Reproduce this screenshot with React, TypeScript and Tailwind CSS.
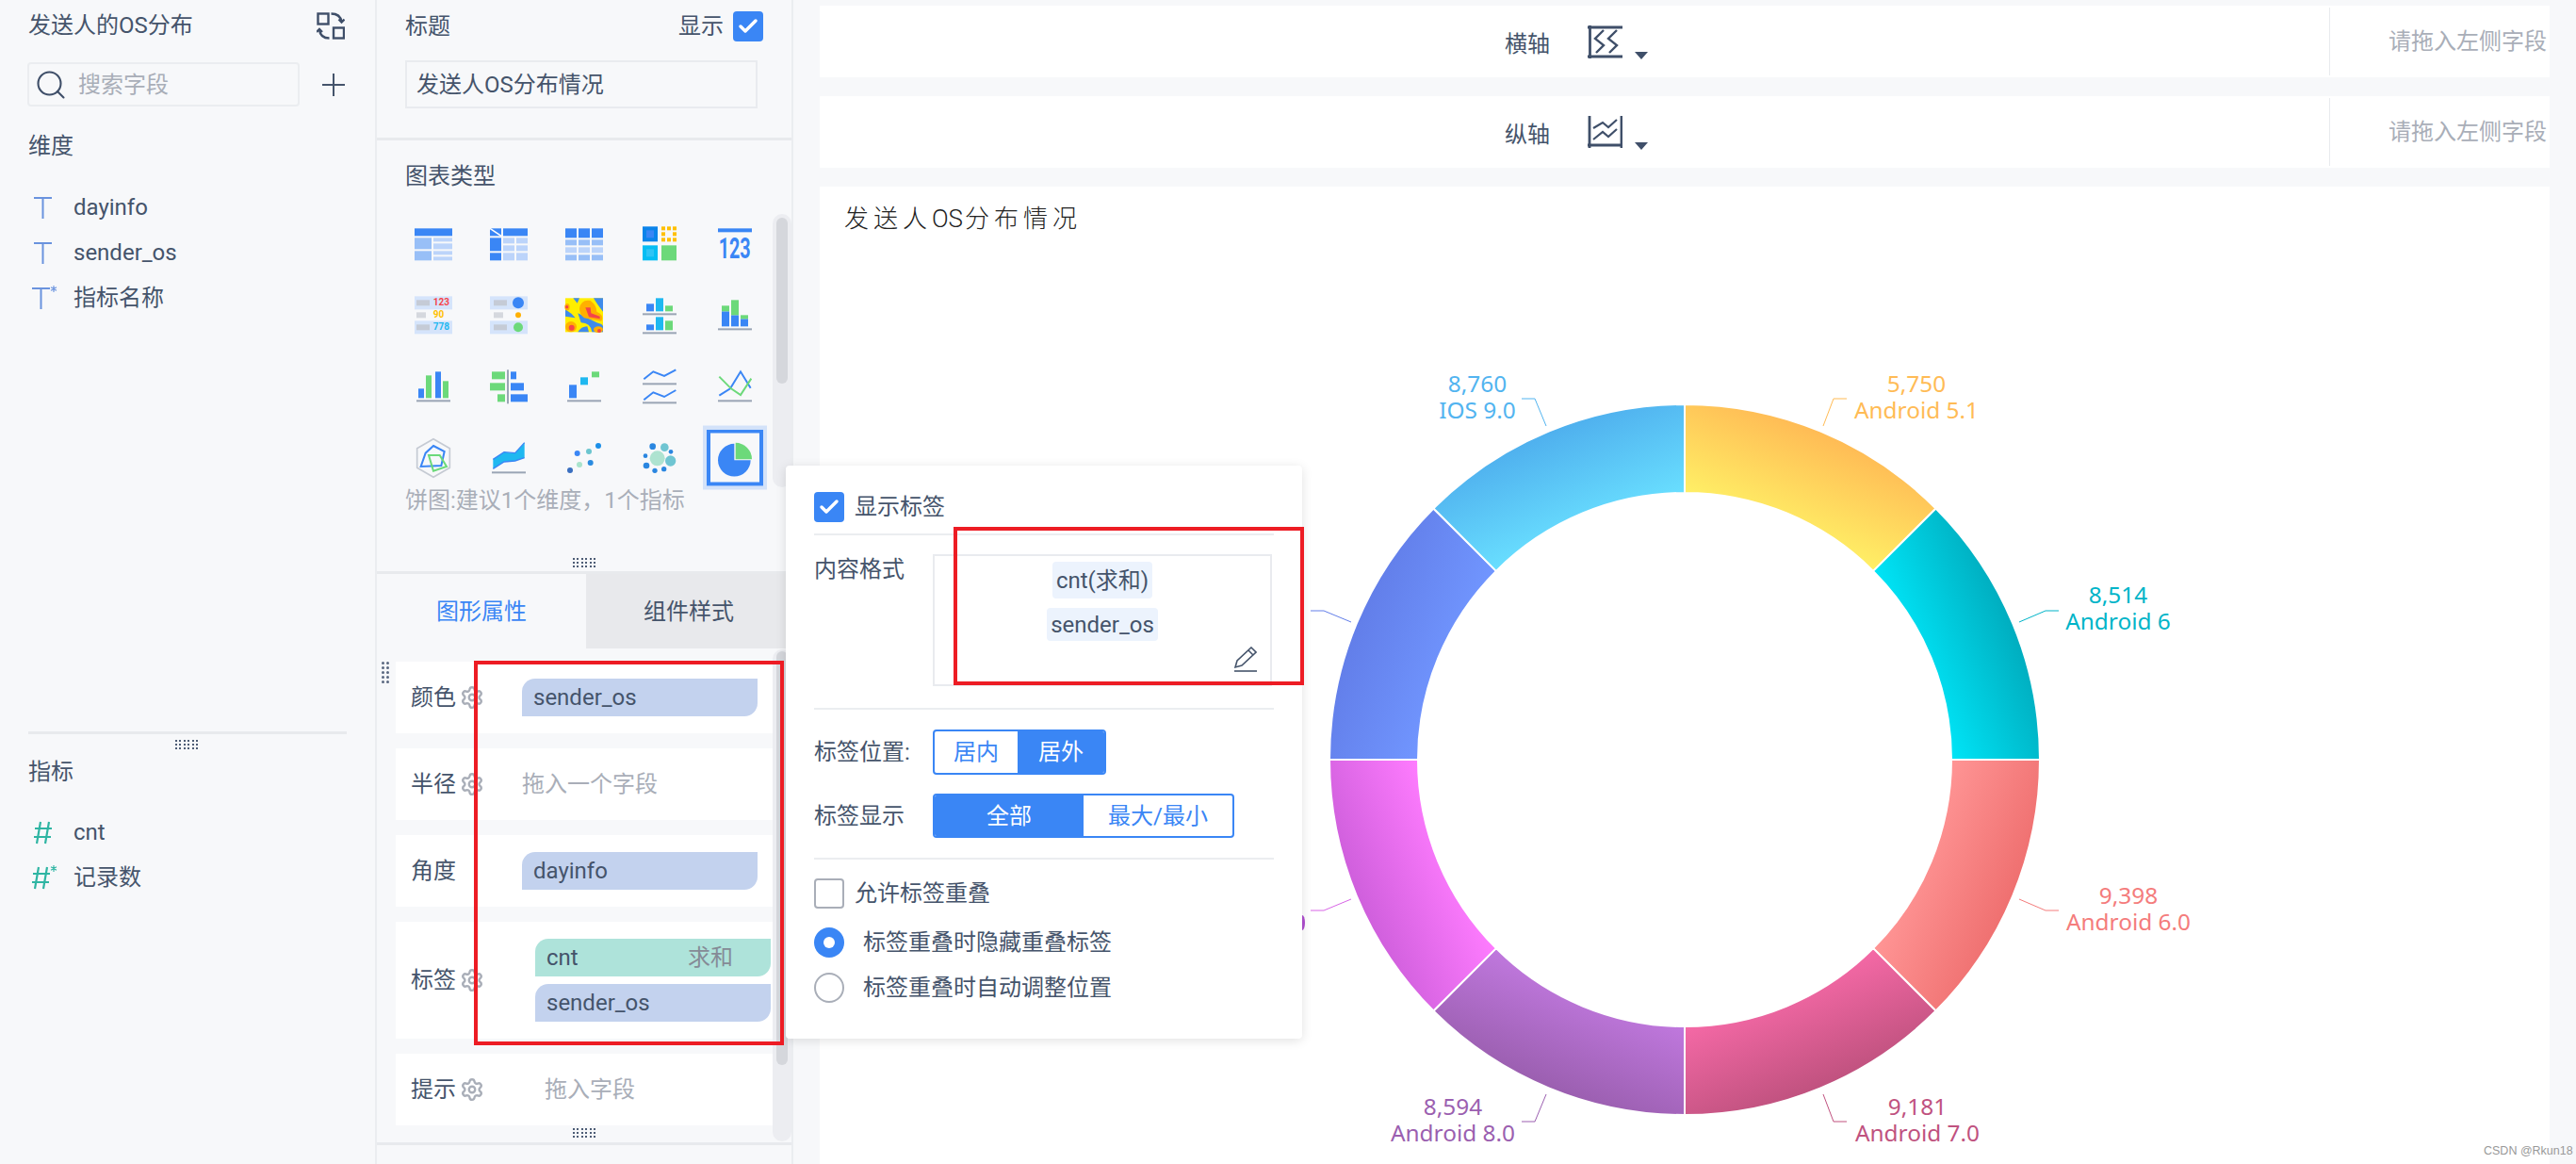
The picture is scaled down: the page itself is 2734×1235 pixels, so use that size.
import { Check, Search, Settings } from "lucide-react";
import type { ReactNode } from "react";

const BLUE = "#3a86f5";
const L1 = "#98bff7";
const L2 = "#bcd4fa";
const GREEN = "#6cd97a";
const CYAN = "#1fb8f0";
const GRAY = "#9aa5b5";
const NUM_FONT = "Roboto, sans-serif";

function Dots({ cols, rows }: { cols: number; rows: number }) {
    const items = Array.from({ length: cols * rows });
    return (
        <div className={cols === 6 ? "grid grid-cols-6 gap-x-[2.6px] gap-y-[2px]" : "grid grid-cols-2 gap-x-[2px] gap-y-[2px]"}>
            {items.map((_, i) => (
                <div key={i} className={rows === 5 ? "w-[3px] h-[3px] rounded-full bg-[#5a6880]" : "w-[2px] h-[2px] bg-[#4d5c75]"} />
            ))}
        </div>
    );
}

function TIcon({ star }: { star?: boolean }) {
    return (
        <svg width="28" height="28" viewBox="0 0 28 28" className="shrink-0" fill="none" stroke="#6a93de" strokeWidth="2">
            {star ? (
                <>
                    <path d="M0 4H19M9.5 4V26" />
                    <path d="M23 1V8M20 2.8L26 6.2M26 2.8L20 6.2" strokeWidth="1.1" />
                </>
            ) : (
                <path d="M2 4H21M11.5 4V26" />
            )}
        </svg>
    );
}

function HashIcon({ star }: { star?: boolean }) {
    return (
        <svg width="28" height="28" viewBox="0 0 28 28" className="shrink-0" fill="none" stroke="#2fb5a3" strokeWidth="2.2">
            {star ? (
                <>
                    <path d="M7 3L3 26M16 3L12 26M1 10H19M0 19H18" />
                    <path d="M23 1V8M20 2.8L26 6.2M26 2.8L20 6.2" strokeWidth="1.1" />
                </>
            ) : (
                <path d="M9 3L5 26M18 3L14 26M3 10H21M2 19H20" />
            )}
        </svg>
    );
}

function FieldRow({ icon, label }: { icon: ReactNode; label: string }) {
    return (
        <div className="flex items-center h-[48px] pl-[34px]">
            {icon}
            <span className="ml-[16px]">{label}</span>
        </div>
    );
}

function SwapIcon() {
    return (
        <svg width="30" height="29" viewBox="0 0 30 29" fill="none" stroke="#3f4f69" strokeWidth="2.4">
            <rect x="1.5" y="1.5" width="11" height="11" />
            <rect x="18" y="16.5" width="11" height="11" />
            <path d="M15.5 1.5Q25 1.5 26.5 10M23.5 7.5l3 3 3-3" />
            <path d="M13.5 27.5Q4 27.5 3 18.5M0 21l3-3 3 3" />
        </svg>
    );
}

function Cb({ checked }: { checked: boolean }) {
    return checked ? (
        <div className="w-[32px] h-[32px] rounded-[4px] bg-[#3a86f5] flex items-center justify-center shrink-0">
            <Check size={24} color="#fff" strokeWidth={3.5} />
        </div>
    ) : (
        <div className="w-[32px] h-[32px] rounded-[4px] border-2 border-[#a9aeb8] shrink-0" />
    );
}

function Icon({ c, r, selected, children }: { c: number; r: number; selected?: boolean; children: ReactNode }) {
    const cx = 120 + 240 * c;
    const cy = 110 + 225 * r;
    return (
        <div className="flex items-center justify-center">
            <div className={selected ? "w-[60px] h-[60px] translate-y-[1.5px] shadow-[inset_0_0_0_4px_#3a86f5,0_0_0_4px_#d3e2f9]" : "w-[60px] h-[60px]"}>
                <svg width="60" height="60" viewBox={`${cx - 90} ${cy - 90} 180 180`} className="overflow-visible">
                    {children}
                </svg>
            </div>
        </div>
    );
}

function R({ x, y, w, h, f }: { x: number; y: number; w: number; h: number; f: string }) {
    return <rect x={x} y={y} width={w} height={h} fill={f} />;
}

function ChartIcons() {
    return (
        <div className="grid grid-cols-5 grid-rows-[75px_75px_75px_75px] w-[400px] h-[300px] shrink-0">
            <Icon c={0} r={0}>
                <R x={60} y={60} w={120} h={24} f={BLUE} />
                <R x={60} y={90} w={54} h={36} f={L1} />
                <R x={60} y={132} w={54} h={30} f={L1} />
                <R x={120} y={90} w={60} h={12} f={L2} />
                <R x={120} y={108} w={60} h={18} f={L2} />
                <R x={120} y={132} w={60} h={12} f={L2} />
                <R x={120} y={150} w={60} h={12} f={L2} />
            </Icon>
            <Icon c={1} r={0}>
                <R x={300} y={60} w={36} h={24} f={BLUE} />
                <path d="M300 60L336 84" stroke="#fff" strokeWidth="5" />
                <R x={342} y={60} w={78} h={24} f={BLUE} />
                <R x={300} y={90} w={36} h={42} f={BLUE} />
                <R x={300} y={138} w={36} h={24} f={BLUE} />
                <R x={342} y={90} w={36} h={18} f={L2} />
                <R x={384} y={90} w={36} h={18} f={L2} />
                <R x={342} y={114} w={36} h={18} f={L2} />
                <R x={384} y={114} w={36} h={18} f={L2} />
                <R x={342} y={138} w={36} h={24} f={L2} />
                <R x={384} y={138} w={36} h={24} f={L2} />
            </Icon>
            <Icon c={2} r={0}>
                {[540, 582, 624].map((x) => (
                    <g key={x}>
                        <R x={x} y={60} w={36} h={30} f={BLUE} />
                        <R x={x} y={96} w={36} h={18} f={L1} />
                        <R x={x} y={120} w={36} h={18} f={L2} />
                        <R x={x} y={144} w={36} h={18} f={L1} />
                    </g>
                ))}
            </Icon>
            <Icon c={3} r={0}>
                <R x={786} y={54} w={48} h={48} f="#0b84ea" />
                <R x={798} y={66} w={24} h={24} f="#3a86f5" />
                {[[846, 54], [864, 54], [882, 54], [846, 72], [882, 72], [846, 90], [864, 90], [882, 90]].map(([x, y]) => (
                    <R key={`${x}-${y}`} x={x} y={y} w={12} h={12} f="#ffc000" />
                ))}
                <R x={786} y={114} w={48} h={48} f="#05bdf3" />
                <R x={798} y={126} w={24} h={24} f="#2fc4f5" />
                <R x={846} y={114} w={48} h={48} f={GREEN} />
            </Icon>
            <Icon c={4} r={0}>
                <R x={1026} y={60} w={108} h={12} f={BLUE} />
                <text x={1028} y={155} fontFamily={NUM_FONT} fontWeight="700" fontSize="92" fill={BLUE} textLength={102} lengthAdjust="spacingAndGlyphs">123</text>
            </Icon>

            <Icon c={0} r={1}>
                <R x={60} y={276} w={120} h={42} f="#d5e4fb" />
                <R x={60} y={354} w={120} h={42} f="#d5e4fb" />
                <R x={66} y={288} w={42} h={18} f="#c5cbd6" />
                <R x={66} y={327} w={30} h={18} f="#d5d8de" />
                <R x={66} y={366} w={42} h={18} f="#c5cbd6" />
                <text x={119} y={306} fontFamily={NUM_FONT} fontWeight="700" fontSize="30" fill="#f5444a">123</text>
                <text x={119} y={345} fontFamily={NUM_FONT} fontWeight="700" fontSize="30" fill="#ffc000">90</text>
                <text x={119} y={384} fontFamily={NUM_FONT} fontWeight="700" fontSize="30" fill={CYAN}>778</text>
            </Icon>
            <Icon c={1} r={1}>
                <R x={300} y={276} w={120} h={42} f="#d5e4fb" />
                <R x={300} y={354} w={120} h={42} f="#d5e4fb" />
                <R x={312} y={288} w={42} h={18} f="#c5cbd6" />
                <R x={312} y={327} w={30} h={18} f="#d5d8de" />
                <R x={312} y={366} w={42} h={18} f="#c5cbd6" />
                <circle cx={390} cy={297} r={18} fill={BLUE} />
                <circle cx={390} cy={336} r={9} fill="#ffb000" />
                <circle cx={390} cy={375} r={15} fill={GREEN} />
            </Icon>
            <Icon c={2} r={1}>
                <R x={540} y={282} w={120} h={108} f="#ffee00" />
                <path d="M580 330Q610 345 640 360Q660 365 660 372L660 390L625 390Q620 360 590 360Q585 345 580 330Z" fill="#3f8bea" />
                <path d="M540 318Q560 330 572 345L540 340ZM580 390Q590 372 610 372L615 390ZM630 282L660 282L660 325Q640 300 630 282ZM565 282L585 282L578 298Z" fill="#3f8bea" />
                <path d="M585 315Q590 285 620 290Q640 305 640 325Q665 335 655 355Q620 350 600 345Q585 335 585 315Z" fill="#ffb000" />
                <ellipse cx={558} cy={373} rx={18} ry={17} fill="#ffb000" />
                <ellipse cx={645} cy={382} rx={15} ry={10} fill="#ffb000" />
                <ellipse cx={546} cy={310} rx={8} ry={11} fill="#ffb000" />
                <path d="M604 312L620 312L622 330L650 340L650 348L615 342Z" fill="#f5444a" />
                <circle cx={560} cy={376} r={9} fill="#f5444a" />
                <circle cx={648} cy={386} r={6} fill="#f5444a" />
                <circle cx={545} cy={310} r={5} fill="#f5444a" />
            </Icon>
            <Icon c={3} r={1}>
                <R x={798} y={300} w={24} h={24} f={BLUE} />
                <R x={828} y={282} w={24} h={42} f={CYAN} />
                <R x={858} y={306} w={24} h={18} f={GREEN} />
                <R x={786} y={330} w={108} h={6} f={GRAY} />
                <R x={798} y={366} w={24} h={18} f={BLUE} />
                <R x={828} y={342} w={24} h={42} f={CYAN} />
                <R x={858} y={354} w={24} h={30} f={GREEN} />
                <R x={786} y={390} w={108} h={6} f={GRAY} />
            </Icon>
            <Icon c={4} r={1}>
                <R x={1038} y={324} w={24} h={48} f={BLUE} />
                <R x={1038} y={306} w={24} h={18} f={GREEN} />
                <R x={1068} y={336} w={24} h={36} f={BLUE} />
                <R x={1068} y={288} w={24} h={48} f={GREEN} />
                <R x={1098} y={348} w={24} h={24} f={BLUE} />
                <R x={1098} y={336} w={24} h={12} f={GREEN} />
                <R x={1026} y={378} w={108} h={6} f={GRAY} />
            </Icon>

            <Icon c={0} r={2}>
                <R x={72} y={570} w={18} h={30} f={BLUE} />
                <R x={96} y={528} w={18} h={72} f={GREEN} />
                <R x={126} y={516} w={18} h={84} f={BLUE} />
                <R x={150} y={546} w={18} h={54} f={GREEN} />
                <R x={66} y={606} w={108} h={6} f={GRAY} />
            </Icon>
            <Icon c={1} r={2}>
                <R x={354} y={510} w={6} h={108} f={GRAY} />
                <R x={306} y={516} w={42} h={24} f={GREEN} />
                <R x={300} y={552} w={48} h={24} f={GREEN} />
                <R x={324} y={588} w={24} h={24} f={GREEN} />
                <R x={366} y={516} w={18} h={24} f={BLUE} />
                <R x={366} y={552} w={42} h={24} f={BLUE} />
                <R x={366} y={588} w={54} h={24} f={BLUE} />
            </Icon>
            <Icon c={2} r={2}>
                <R x={552} y={558} w={24} h={42} f={BLUE} />
                <R x={588} y={534} w={24} h={24} f={CYAN} />
                <R x={624} y={516} w={24} h={18} f={GREEN} />
                <R x={546} y={606} w={108} h={6} f={GRAY} />
            </Icon>
            <Icon c={3} r={2}>
                <polyline points="790,540 820,516 855,530 892,510" fill="none" stroke={BLUE} strokeWidth="6" />
                <R x={786} y={552} w={108} h={6} f={GRAY} />
                <polyline points="790,606 820,582 855,596 892,575" fill="none" stroke={BLUE} strokeWidth="6" />
                <R x={786} y={612} w={108} h={6} f={GRAY} />
            </Icon>
            <Icon c={4} r={2}>
                <polyline points="1030,592 1065,570 1098,516 1130,568" fill="none" stroke={BLUE} strokeWidth="6" />
                <polyline points="1030,532 1068,570 1098,590 1132,538" fill="none" stroke={GREEN} strokeWidth="6" />
                <R x={1026} y={606} w={108} h={6} f={GRAY} />
            </Icon>

            <Icon c={0} r={3}>
                <polygon points="120,730 172,760 172,822 120,852 68,822 68,760" fill="none" stroke="#c5cad3" strokeWidth="5" />
                <polygon points="120,752 155,770 145,815 80,818 95,775" fill="none" stroke={BLUE} strokeWidth="6" />
                <polygon points="105,782 140,782 162,818 120,832" fill="none" stroke={GREEN} strokeWidth="6" />
            </Icon>
            <Icon c={1} r={3}>
                <polygon points="310,795 345,772 380,775 410,742 410,790 380,800 345,803 310,825" fill={CYAN} />
                <polyline points="310,795 345,772 380,775 410,742" fill="none" stroke={BLUE} strokeWidth="4" />
                <polyline points="310,825 345,803 380,800 410,790" fill="none" stroke={BLUE} strokeWidth="4" />
                <R x={306} y={834} w={108} h={6} f={GRAY} />
            </Icon>
            <Icon c={2} r={3}>
                <circle cx={555} cy={830} r={9} fill="#3a6fc0" />
                <circle cx={585} cy={812} r={9} fill="#a9e3cc" />
                <circle cx={620} cy={806} r={9} fill="#2a8be0" />
                <circle cx={578} cy={776} r={9} fill="#3a86f5" />
                <circle cx={615} cy={770} r={9} fill="#6cc5cf" />
                <circle cx={645} cy={752} r={9} fill="#1c8fe8" />
            </Icon>
            <Icon c={3} r={3}>
                <circle cx={833} cy={792} r={24} fill="#aee3d0" />
                <circle cx={875} cy={800} r={17} fill="#6fc5d2" />
                <circle cx={856} cy={757} r={13} fill="#6fc5d2" />
                <circle cx={818} cy={754} r={10} fill="#2a86e0" />
                <circle cx={876} cy={771} r={7} fill="#2a86e0" />
                <circle cx={795} cy={784} r={7} fill="#2a86e0" />
                <circle cx={798} cy={815} r={10} fill="#2a86e0" />
                <circle cx={825} cy={831} r={8} fill="#2a86e0" />
                <circle cx={854} cy={826} r={8} fill="#2a86e0" />
            </Icon>
            <Icon c={4} r={3} selected>
                <path d="M1078 741A52 52 0 1 0 1130 793L1078 793Z" fill={BLUE} />
                <path d="M1082 738A52 52 0 0 1 1134 790L1082 790Z" fill={GREEN} />
            </Icon>
        </div>
    );
}

function Pill({ label, extra, green }: { label: string; extra?: string; green?: boolean }) {
    return (
        <div className={`w-[250px] h-[40px] flex items-center justify-between pl-[12px] pr-[40px] rounded-tl-[14px] rounded-br-[14px] ${green ? "bg-[#aee3da]" : "bg-[#c3d2ee]"}`}>
            <span>{label}</span>
            {extra && <span className="text-[#858b96]">{extra}</span>}
        </div>
    );
}

function PropRow({ label, gear = true, tall, children }: { label: string; gear?: boolean; tall?: boolean; children: ReactNode }) {
    return (
        <div className={`flex items-center bg-white ${tall ? "h-[124px]" : "h-[76px]"}`}>
            <div className="w-[134px] pl-[16px] flex items-center shrink-0">
                <span>{label}</span>
                {gear && <Settings size={26} color="#a9aeb8" strokeWidth={2.2} className="ml-[4px]" />}
            </div>
            {children}
        </div>
    );
}

function LeftPanel() {
    return (
        <aside className="w-[400px] shrink-0 border-r-2 border-[#ebedf0]">
            <div className="h-[54px] flex items-center justify-between pl-[30px] pr-[32px]">
                <span>发送人的OS分布</span>
                <SwapIcon />
            </div>
            <div className="mt-[12px] h-[47px] flex items-center pl-[29px]">
                <div className="w-[289px] h-[47px] border-2 border-[#ebedf0] rounded-[4px] flex items-center pl-[5px]">
                    <Search size={36} color="#3f4f69" strokeWidth={1.4} />
                    <span className="ml-[11px] text-[#a9aeb8]">搜索字段</span>
                </div>
                <svg width="24" height="24" viewBox="0 0 24 24" stroke="#45546b" strokeWidth="2" className="ml-[24px]">
                    <path d="M12 0V24M0 12H24" />
                </svg>
            </div>
            <div className="mt-[25px] h-[34px] flex items-center pl-[30px]">维度</div>
            <div className="mt-[24px]">
                <FieldRow icon={<TIcon />} label="dayinfo" />
                <FieldRow icon={<TIcon />} label="sender_os" />
                <FieldRow icon={<TIcon star />} label="指标名称" />
            </div>
            <div className="mt-[436px] ml-[30px] w-[338px] h-[3px] bg-[#e8eaed]" />
            <div className="h-[22px] flex items-center justify-center ml-[-2px] w-[400px]">
                <Dots cols={6} rows={3} />
            </div>
            <div className="mt-[1px] h-[34px] flex items-center pl-[30px]">指标</div>
            <div className="mt-[23px]">
                <FieldRow icon={<HashIcon />} label="cnt" />
                <FieldRow icon={<HashIcon star />} label="记录数" />
            </div>
        </aside>
    );
}

function MiddlePanel() {
    return (
        <aside className="w-[442px] shrink-0 border-r-2 border-[#ebedf0] flex flex-col">
            <div className="h-[56px] flex items-center justify-between pl-[30px] pr-[30px]">
                <span>标题</span>
                <div className="flex items-center gap-[10px]">
                    <span>显示</span>
                    <Cb checked />
                </div>
            </div>
            <div className="mt-[8px] ml-[30px] w-[374px] h-[51px] border-2 border-[#e9ebef] flex items-center pl-[10px]">发送人OS分布情况</div>
            <div className="mt-[31px] h-[3px] bg-[#e8eaed] shrink-0" />
            <div className="mt-[21px] h-[34px] flex items-center pl-[30px]">图表类型</div>
            <div className="mt-[17px] h-[296px] flex pl-[20px]">
                <ChartIcons />
                <div className="w-[20px] h-[290px] mt-[6px] rounded-[10px] bg-[#ecedf1] flex justify-center pt-[4px]">
                    <div className="w-[12px] h-[176px] rounded-[6px] bg-[#d5d7dc]" />
                </div>
            </div>
            <div className="h-[28px] flex items-center pl-[30px] text-[#a9aeb8]">饼图:建议1个维度{"\uFF0C"}1个指标</div>
            <div className="mt-[47px] h-[10px] flex items-center justify-center">
                <Dots cols={6} rows={3} />
            </div>
            <div className="mt-[4px] h-[3px] bg-[#e8eaed] shrink-0" />
            <div className="h-[79px] flex shrink-0">
                <div className="w-[222px] flex items-center justify-center text-[#3a86f5]">图形属性</div>
                <div className="flex-1 flex items-center justify-center bg-[#e8e9ec]">组件样式</div>
            </div>
            <div className="relative h-[524px] flex pl-[20px] shrink-0">
                <div className="absolute left-[5px] top-[14px]">
                    <Dots cols={2} rows={5} />
                </div>
                <div className="w-[400px] shrink-0 pt-[14px] flex flex-col gap-[16px]">
                    <PropRow label="颜色">
                        <Pill label="sender_os" />
                    </PropRow>
                    <PropRow label="半径">
                        <span className="text-[#a9aeb8]">拖入一个字段</span>
                    </PropRow>
                    <PropRow label="角度" gear={false}>
                        <Pill label="dayinfo" />
                    </PropRow>
                    <PropRow label="标签" tall>
                        <div className="ml-[14px] flex flex-col gap-[8px]">
                            <Pill label="cnt" extra="求和" green />
                            <Pill label="sender_os" />
                        </div>
                    </PropRow>
                    <PropRow label="提示">
                        <span className="ml-[24px] text-[#a9aeb8]">拖入字段</span>
                    </PropRow>
                    <div className="flex justify-center -mt-[13px]">
                        <Dots cols={6} rows={3} />
                    </div>
                </div>
                <div className="w-[20px] h-[522px] mt-[1px] rounded-[10px] bg-[#ecedf1] flex justify-center pt-[2px]">
                    <div className="w-[12px] h-[439px] rounded-[6px] bg-[#d5d7dc]" />
                </div>
            </div>
            <div className="h-[3px] bg-[#e8eaed] shrink-0" />
        </aside>
    );
}

function AxisBar({ label, icon }: { label: string; icon: ReactNode }) {
    return (
        <div className="h-[76px] bg-white flex items-center shrink-0">
            <div className="w-[1603px] h-[72px] flex items-center pl-[727px] border-r border-[#e8eaed] shrink-0">
                <span className="pt-[5px]">{label}</span>
                <div className="ml-[40px]">{icon}</div>
                <div className="ml-[13px] mt-[29px] w-0 h-0 border-x-[7px] border-x-transparent border-t-[8px] border-t-[#3f4f69]" />
            </div>
            <span className="ml-[62px] text-[#a9aeb8] whitespace-nowrap">请拖入左侧字段</span>
        </div>
    );
}

const CX = 1788;
const CY = 806;
const RO = 377;
const RI = 283;

const SEGMENTS = [
    { id: "s0", outer: "#ffbb55", inner: "#fff066" },
    { id: "s1", outer: "#00adbf", inner: "#00e5f7" },
    { id: "s2", outer: "#ef7070", inner: "#ff9595" },
    { id: "s3", outer: "#c0527f", inner: "#f569a6" },
    { id: "s4", outer: "#9b5fb0", inner: "#c078de" },
    { id: "s5", outer: "#cf5fdc", inner: "#ff7cff" },
    { id: "s6", outer: "#627ee9", inner: "#7196ff" },
    { id: "s7", outer: "#4fb0ee", inner: "#69dfff" },
];

function pt(r: number, deg: number) {
    const a = (deg * Math.PI) / 180;
    return [CX + r * Math.sin(a), CY - r * Math.cos(a)];
}

const LINES = [
    { c: "#ffbb55", p: "1935,452 1946,423 1960,423" },
    { c: "#00b4c8", p: "2143,660 2171,648 2185,648" },
    { c: "#f47c7c", p: "2143,954 2171,966 2185,966" },
    { c: "#c0527f", p: "1935,1161 1946,1190 1960,1190" },
    { c: "#9b5fb0", p: "1641,1161 1629,1190 1615,1190" },
    { c: "#d865e6", p: "1434,954 1405,966 1391,966" },
    { c: "#627ee9", p: "1434,660 1405,648 1391,648" },
    { c: "#52b4f0", p: "1641,452 1629,423 1615,423" },
];

const LABELS = [
    { c: "#ffbb55", x: 2034, y: 407, v: "5,750", n: "Android 5.1" },
    { c: "#00b4c8", x: 2248, y: 631, v: "8,514", n: "Android 6" },
    { c: "#f47c7c", x: 2259, y: 950, v: "9,398", n: "Android 6.0" },
    { c: "#c0527f", x: 2035, y: 1174, v: "9,181", n: "Android 7.0" },
    { c: "#9b5fb0", x: 1542, y: 1174, v: "8,594", n: "Android 8.0" },
    { c: "#52b4f0", x: 1568, y: 407, v: "8,760", n: "IOS 9.0" },
];

function Donut() {
    return (
        <svg width="1836" height="971" viewBox="870 264 1836 971" className="block">
            <defs>
                {SEGMENTS.map((s, i) => {
                    const mid = i * 45 + 22.5;
                    const [x1, y1] = pt(RO, mid);
                    const [x2, y2] = pt(RI * Math.cos(Math.PI / 8), mid);
                    return (
                        <linearGradient key={s.id} id={s.id} gradientUnits="userSpaceOnUse" x1={x1} y1={y1} x2={x2} y2={y2}>
                            <stop offset="0" stopColor={s.outer} />
                            <stop offset="1" stopColor={s.inner} />
                        </linearGradient>
                    );
                })}
            </defs>
            {SEGMENTS.map((s, i) => {
                const [ax, ay] = pt(RO, i * 45);
                const [bx, by] = pt(RO, i * 45 + 45);
                const [cx, cy] = pt(RI, i * 45 + 45);
                const [dx, dy] = pt(RI, i * 45);
                return (
                    <path
                        key={s.id}
                        d={`M${ax} ${ay}A${RO} ${RO} 0 0 1 ${bx} ${by}L${cx} ${cy}A${RI} ${RI} 0 0 0 ${dx} ${dy}Z`}
                        fill={`url(#${s.id})`}
                        stroke="#fff"
                        strokeWidth="2"
                    />
                );
            })}
            {LINES.map((l) => (
                <polyline key={l.p} points={l.p} fill="none" stroke={l.c} strokeWidth="1" />
            ))}
            {LABELS.map((l) => (
                <g key={l.n} fill={l.c} textAnchor="middle" fontSize="24.4" fontFamily="'Noto Sans', sans-serif">
                    <text x={l.x} y={l.y + 9}>{l.v}</text>
                    <text x={l.x} y={l.y + 9 + 28}>{l.n}</text>
                </g>
            ))}
            <ellipse cx="1382" cy="979" rx="3" ry="8" fill="#b04fd0" />
        </svg>
    );
}

function Popup() {
    return (
        <div className="absolute left-[834px] top-[494px] w-[548px] h-[608px] bg-white rounded-[4px] shadow-[0_2px_12px_rgba(0,0,0,0.12)] pl-[30px] pr-[30px] pt-[28px]">
            <div className="flex items-center gap-[11px] h-[32px]">
                <Cb checked />
                <span>显示标签</span>
            </div>
            <div className="mt-[12px] h-[2px] bg-[#ebedf0]" />
            <div className="mt-[20px] flex items-start">
                <span className="w-[126px] leading-[34px] -mt-[1px]">内容格式</span>
                <div className="relative w-[360px] h-[140px] border-2 border-[#e9ebef] flex flex-col items-center pt-[6px]">
                    <span className="h-[39px] px-[4px] rounded-[4px] bg-[#ecf3fd] flex items-center">cnt(求和)</span>
                    <span className="mt-[10px] h-[35px] px-[4px] rounded-[4px] bg-[#ecf3fd] flex items-center">sender_os</span>
                    <svg width="24" height="27" viewBox="0 0 24 27" fill="none" stroke="#45546b" strokeWidth="1.6" className="absolute right-[14px] top-[96px]">
                        <path d="M18 1L23 6L8 20L1 22L3 15ZM15 4L20 9" />
                        <path d="M0 26H24" />
                    </svg>
                </div>
            </div>
            <div className="mt-[23px] h-[2px] bg-[#ebedf0]" />
            <div className="mt-[21px] flex items-center h-[48px]">
                <span className="w-[126px]">标签位置:</span>
                <div className="flex w-[184px] h-[48px] rounded-[4px] border-2 border-[#3a86f5] overflow-hidden">
                    <div className="w-[88px] flex items-center justify-center text-[#3a86f5]">居内</div>
                    <div className="flex-1 flex items-center justify-center bg-[#3a86f5] text-white">居外</div>
                </div>
            </div>
            <div className="mt-[20px] flex items-center h-[47px]">
                <span className="w-[126px]">标签显示</span>
                <div className="flex w-[320px] h-[47px] rounded-[4px] border-2 border-[#3a86f5] overflow-hidden">
                    <div className="w-[158px] flex items-center justify-center bg-[#3a86f5] text-white">全部</div>
                    <div className="flex-1 flex items-center justify-center text-[#3a86f5]">最大/最小</div>
                </div>
            </div>
            <div className="mt-[21px] h-[2px] bg-[#ebedf0]" />
            <div className="mt-[20px] flex items-center gap-[11px] h-[32px]">
                <Cb checked={false} />
                <span>允许标签重叠</span>
            </div>
            <div className="mt-[20px] flex items-center h-[32px]">
                <div className="w-[32px] h-[32px] rounded-full bg-[#3a86f5] flex items-center justify-center">
                    <div className="w-[12px] h-[12px] rounded-full bg-white" />
                </div>
                <span className="ml-[20px]">标签重叠时隐藏重叠标签</span>
            </div>
            <div className="mt-[16px] flex items-center h-[32px]">
                <div className="w-[32px] h-[32px] rounded-full border-2 border-[#a9aeb8]" />
                <span className="ml-[20px]">标签重叠时自动调整位置</span>
            </div>
        </div>
    );
}

export default function App() {
    return (
        <div className="relative w-[2734px] h-[1235px] overflow-hidden flex bg-[#f7f8fa] text-[24px] leading-none text-[#45546b] [font-family:Roboto,'Noto_Sans_CJK_SC',sans-serif]">
            <LeftPanel />
            <MiddlePanel />
            <main className="flex-1 pl-[28px] pr-[28px] pt-[6px] flex flex-col gap-[20px]">
                <AxisBar
                    label="横轴"
                    icon={
                        <svg width="37" height="35" viewBox="0 0 37 35" fill="none" stroke="#3f4f69" strokeWidth="2.4" className="block">
                            <path d="M0 2H37M0 33H37M2.5 0V35" strokeWidth="2.8" />
                            <path d="M17 5L8 14L17 21L9 29M31 5L22 14L31 21L23 29" />
                        </svg>
                    }
                />
                <AxisBar
                    label="纵轴"
                    icon={
                        <svg width="37" height="35" viewBox="0 0 37 35" fill="none" stroke="#3f4f69" strokeWidth="2.2" className="block">
                            <path d="M2 0V34M36 0V34M0 31H37" strokeWidth="2.8" />
                            <path d="M6 13L16 7L22 12L31 4M6 25L16 17L22 22L31 14" />
                        </svg>
                    }
                />
                <div className="flex-1 bg-white min-h-0">
                    <div className="h-[66px] flex items-center pl-[26px] pt-[1px] text-[26px] font-light tracking-[5px] text-[#222]">
                        发送人<span className="tracking-normal mr-[2px]">OS</span>分布情况
                    </div>
                    <Donut />
                </div>
            </main>

            <Popup />

            {/* red annotation boxes */}
            <div className="absolute left-[503px] top-[701px] w-[329px] h-[408px] border-[4px] border-[#ed1c24]" />
            <div className="absolute left-[1012px] top-[559px] w-[372px] h-[168px] border-[4px] border-[#ed1c24]" />

            <div className="absolute left-[2636px] top-[1213px] text-[12.5px] leading-[16px] text-[#999] whitespace-nowrap [font-family:'Liberation_Sans',sans-serif]">CSDN @Rkun18</div>
        </div>
    );
}
